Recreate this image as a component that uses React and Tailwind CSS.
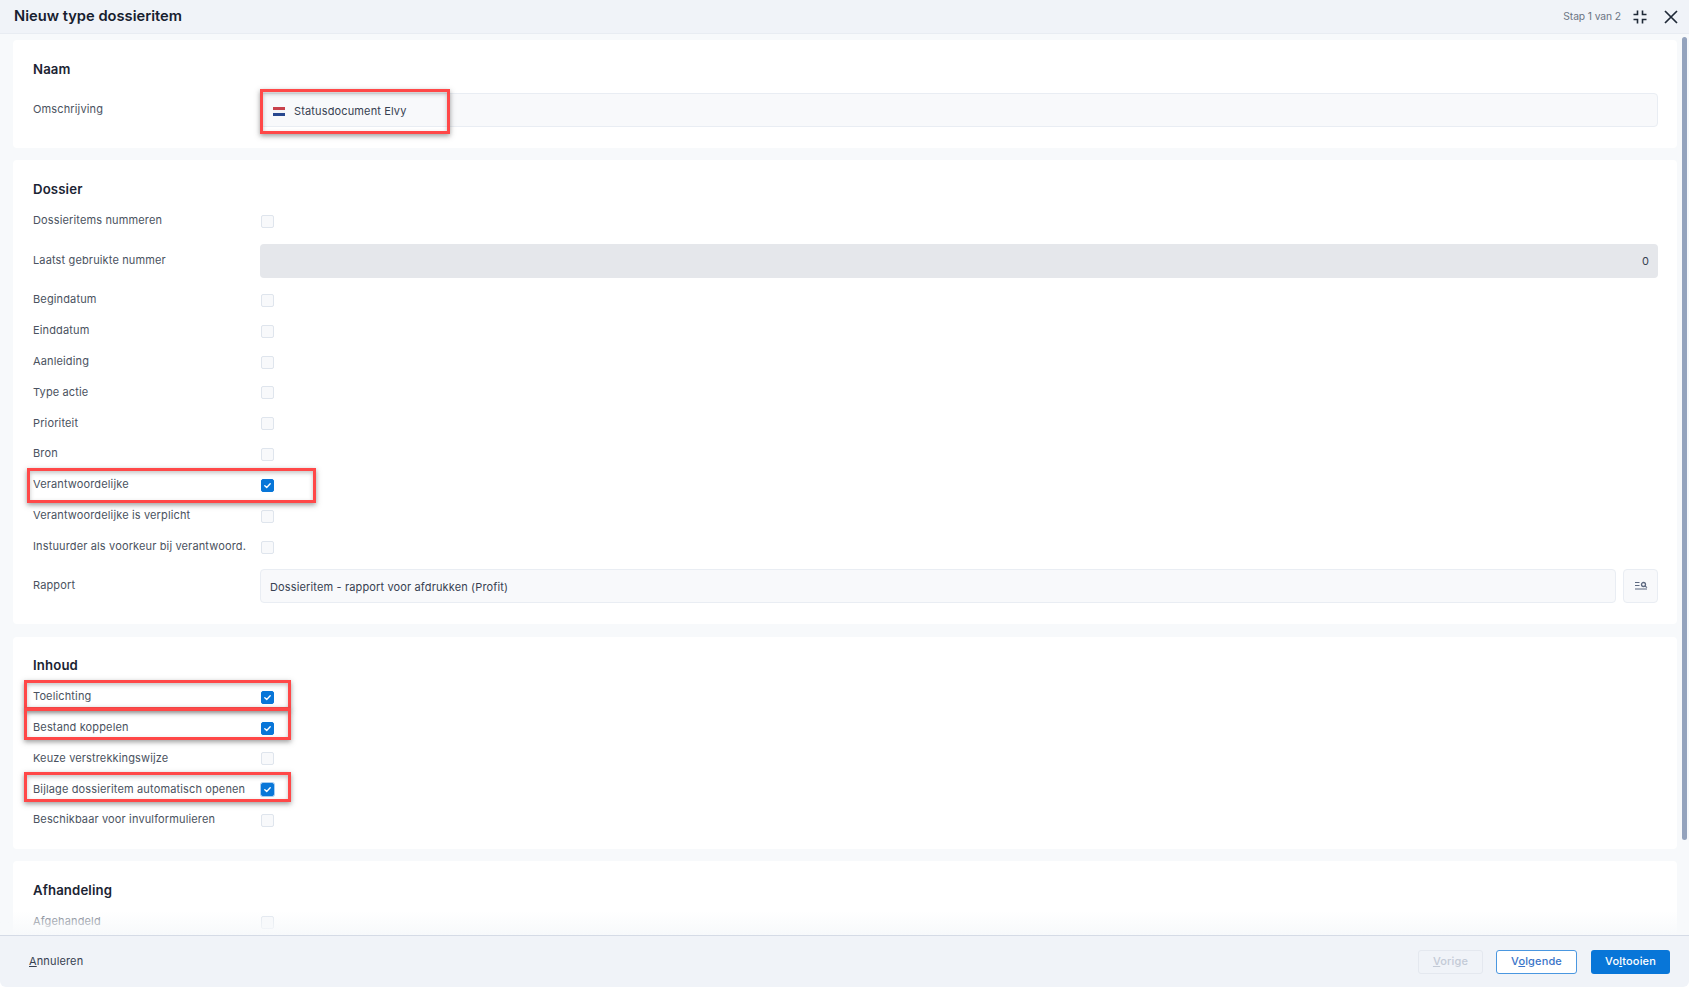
import React from "react";

const Check = () => (
  <svg viewBox="0 0 13 13" className="w-[13px] h-[13px]">
    <path d="M3.8 6.8 L5.7 8.4 L9.2 4.8" fill="none" stroke="#ffffff" strokeWidth="1.4" strokeLinecap="round" strokeLinejoin="round" />
  </svg>
);

const Box = ({ on, focus }) => (
  <span
    className={
      "block w-[13px] h-[13px] rounded-[2px] border " +
      (on ? "bg-[#0876d8] border-[#0876d8] " : "bg-[#f8f9fb] border-[#dfe5ed] ") +
      (focus ? "ring-1 ring-[#a9cdf0]" : "")
    }
  >
    {on ? <span className="block -m-px"><Check /></span> : null}
  </span>
);

const Row = ({ label, on, focus, muted }) => (
  <div className="flex items-center h-[30.875px]">
    <span className={"w-[228px] shrink-0 pb-[2px] text-[11px] tracking-[0.14px] whitespace-nowrap " + (muted ? "text-[#6b7280]" : "text-[#4a5260]")}>{label}</span>
    <Box on={on} focus={focus} />
  </div>
);

const Heading = ({ children, className }) => (
  <h2 className={"h-5 leading-5 text-[13.2px] font-semibold text-[#1b2433] " + className}>{children}</h2>
);

const Card = ({ children, className }) => (
  <section className={"bg-white rounded-[4px] pl-5 pr-[19px] " + className}>{children}</section>
);

const Flag = () => (
  <svg viewBox="0 0 12 9" className="w-3 h-[9px] mr-[9px] shrink-0">
    <rect width="12" height="3" fill="#c8414b" />
    <rect y="3" width="12" height="3" fill="#f3f4f7" />
    <rect y="6" width="12" height="3" fill="#27478f" />
  </svg>
);

const Mark = ({ className }) => (
  <div className={"absolute border-[3px] border-[#ff4848] shadow-[0_2px_5px_rgba(60,60,60,0.5),inset_0_2px_4px_rgba(60,60,60,0.3)] pointer-events-none " + className} />
);

export default function App() {
  return (
    <div className="relative w-[1689px] h-[988px] overflow-hidden bg-white text-[11px] tracking-[0.14px] font-['Inter',sans-serif] flex flex-col">
      <header className="h-[34px] shrink-0 bg-[#f0f3f8] border-b border-[#e8ecf2] flex items-center pl-[14px] pr-[11px]">
        <h1 className="text-[14.7px] tracking-normal font-semibold text-[#17202f]">Nieuw type dossieritem</h1>
        <div className="ml-auto flex items-center">
          <span className="text-[10.3px] text-[#6b7483] tracking-[-0.1px]">Stap 1 van 2</span>
          <svg viewBox="0 0 14 14" className="w-[14px] h-[14px] ml-3" fill="none" stroke="#1f2937" strokeWidth="1.6">
            <path d="M4.5 0.5V4.5H0.5M9.5 0.5V4.5H13.5M4.5 13.5V9.5H0.5M9.5 13.5V9.5H13.5" />
          </svg>
          <svg viewBox="0 0 14 14" className="w-[14px] h-[14px] ml-[17px]" fill="none" stroke="#1f2937" strokeWidth="1.7">
            <path d="M1 1L13 13M13 1L1 13" />
          </svg>
        </div>
      </header>

      <div className="flex-1 min-h-0 flex bg-[#f7f9fb] relative">
        <main className="w-[1664px] ml-[13px] pt-[6px] overflow-hidden shrink-0">
          <Card className="pt-[19px] pb-[21px] mb-3">
            <Heading className="mb-[14px]">Naam</Heading>
            <div className="flex">
              <span className="w-[227px] shrink-0 pt-[8px] text-[#4a5260]">Omschrijving</span>
              <div className="flex-1 h-[34px] flex items-center pl-3 pt-[2px] rounded-[4px] bg-[#f8f9fb] border border-[#e9edf3] text-[#374151]">
                <Flag />
                <span>Statusdocument Elvy</span>
              </div>
            </div>
          </Card>

          <Card className="pt-[19px] pb-[21px] mb-[13px]">
            <Heading className="mb-[7px]">Dossier</Heading>
            <Row label="Dossieritems nummeren" />
            <div className="flex mt-[7px] mb-[7px]">
              <span className="w-[227px] shrink-0 pt-[8px] text-[#4a5260]">Laatst gebruikte nummer</span>
              <div className="flex-1 h-[34px] flex items-center justify-end pr-[9px] rounded-[4px] bg-[#e5e7eb] text-[#374151]">0</div>
            </div>
            <Row label="Begindatum" />
            <Row label="Einddatum" />
            <Row label="Aanleiding" />
            <Row label="Type actie" />
            <Row label="Prioriteit" />
            <Row label="Bron" />
            <Row label="Verantwoordelijke" on />
            <Row label="Verantwoordelijke is verplicht" />
            <Row label="Instuurder als voorkeur bij verantwoord." />
            <div className="flex mt-[6px]">
              <span className="w-[227px] shrink-0 pt-[8px] text-[#4a5260]">Rapport</span>
              <div className="flex-1 h-[34px] flex items-center pl-[9px] pt-[2px] rounded-[4px] bg-[#f8f9fb] border border-[#e9edf3] text-[#374151]">
                Dossieritem - rapport voor afdrukken (Profit)
              </div>
              <button className="ml-[7px] w-[35px] h-[34px] flex items-center justify-center rounded-[4px] bg-[#f8f9fb] border border-[#e9edf3]">
                <svg viewBox="0 0 14 10" className="w-[14px] h-[10px]" fill="none" stroke="#5d6980" strokeWidth="1">
                  <path d="M1 1.5H5.5M1 4.5H5.5M1 8H13" />
                  <circle cx="9.5" cy="3.5" r="2" strokeWidth="1.3" />
                  <path d="M11 5L13 6.6" strokeWidth="1.2" />
                </svg>
              </button>
            </div>
          </Card>

          <Card className="pt-[18px] pb-[13px] mb-3">
            <Heading className="mb-[7px]">Inhoud</Heading>
            <Row label="Toelichting" on />
            <Row label="Bestand koppelen" on />
            <Row label="Keuze verstrekkingswijze" />
            <Row label="Bijlage dossieritem automatisch openen" on focus />
            <Row label="Beschikbaar voor invulformulieren" />
          </Card>

          <Card className="pt-[19px] pb-5">
            <Heading className="mb-[7px]">Afhandeling</Heading>
            <Row label="Afgehandeld" muted />
          </Card>
        </main>
        <div className="w-[5px] ml-[5px] mt-[3px] h-[803px] rounded-full bg-[#94a3bd] shrink-0" />
        <div className="absolute left-0 right-0 bottom-0 h-[24px] bg-gradient-to-b from-transparent to-[#f7f9fb] pointer-events-none" />
      </div>

      <footer className="h-[52px] shrink-0 mb-px bg-[#f0f3f8] border-t border-[#d5dbe6] rounded-b-[6px] flex items-center pl-[29px] pr-[19px] text-[#374151]">
        <span><span className="underline">A</span>nnuleren</span>
        <div className="ml-auto flex items-center font-medium">
          <button className="w-[65px] h-6 rounded-[3px] border border-[#e4e8ef] text-[#c3cad6]"><span className="underline">V</span>orige</button>
          <button className="w-[81px] h-6 ml-[13px] rounded-[3px] border border-[#4a97e0] bg-white text-[#3a74c8]">V<span className="underline">o</span>lgende</button>
          <button className="w-[79px] h-6 ml-[14px] rounded-[3px] bg-[#0876d8] text-white">Vo<span className="underline">l</span>tooien</button>
        </div>
      </footer>

      <Mark className="left-[260px] top-[89px] w-[190px] h-[45px]" />
      <Mark className="left-[27px] top-[468px] w-[289px] h-[35px]" />
      <Mark className="left-[24px] top-[680px] w-[267px] h-[30px]" />
      <Mark className="left-[24px] top-[708px] w-[267px] h-[32px]" />
      <Mark className="left-[24px] top-[772px] w-[267px] h-[30px]" />
    </div>
  );
}
